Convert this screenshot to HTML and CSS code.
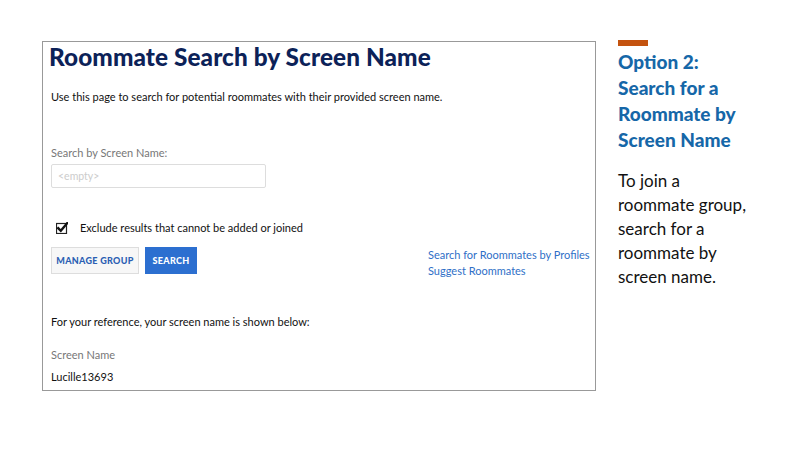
FILE: index.html
```html
<!DOCTYPE html>
<html>
<head>
<meta charset="utf-8">
<link rel="stylesheet" href="styles.css">
</head>
<body>
<div class="slide">
  <div class="frame">
    <h1 class="title">Roommate Search by Screen Name</h1>
    <p class="desc">Use this page to search for potential roommates with their provided screen name.</p>
    <div class="label">Search by Screen Name:</div>
    <div class="input">&lt;empty&gt;</div>
    <div class="check-row">
      <span class="checkbox">
        <svg width="12" height="12" viewBox="0 0 12 12"><rect x="0.5" y="1.5" width="10" height="10" fill="#fff" stroke="#222" stroke-width="1.2"/><path d="M2.2 6.2 L4.8 8.8 L11.2 1.2" fill="none" stroke="#111" stroke-width="2.4" stroke-linecap="square"/></svg>
      </span>
      <span class="check-label">Exclude results that cannot be added or joined</span>
    </div>
    <div class="action-row">
      <div class="buttons">
        <span class="btn btn-secondary">MANAGE GROUP</span>
        <span class="btn btn-primary">SEARCH</span>
      </div>
      <div class="links">
        <span class="link">Search for Roommates by Profiles</span>
        <span class="link">Suggest Roommates</span>
      </div>
    </div>
    <p class="ref">For your reference, your screen name is shown below:</p>
    <div class="label name-label">Screen Name</div>
    <div class="name-value">Lucille13693</div>
  </div>
  <aside class="side">
    <div class="accent"></div>
    <h2 class="side-title">Option 2: Search for a Roommate by Screen Name</h2>
    <p class="side-text">To join a roommate group, search for a roommate by screen name.</p>
  </aside>
</div>
</body>
</html>
```
FILE: styles.css
```css
html, body {
  margin: 0;
  padding: 0;
  background: #fff;
}
body {
  font-family: Lato, "Open Sans", "Liberation Sans", sans-serif;
  color: #1a1a1a;
}
.slide {
  width: 800px;
  height: 450px;
  display: flex;
  align-items: flex-start;
  padding: 40px 0 0 42px;
  box-sizing: border-box;
  gap: 22px;
}
.frame {
  width: 554px;
  height: 350px;
  box-sizing: border-box;
  margin-top: 1px;
  border: 1.5px solid #999;
  padding: 0 6px 0 8px;
  display: flex;
  flex-direction: column;
}
.title {
  margin: 0 0 0 -2px;
  font-size: 24.3px;
  line-height: 30px;
  font-weight: 900;
  color: #0c2258;
  letter-spacing: 0.1px;
}
.desc {
  margin: 17px 0 0;
  font-size: 11px;
  line-height: 16px;
  color: #111;
}
.label {
  margin-top: 40px;
  font-size: 11px;
  line-height: 16px;
  color: #777;
}
.input {
  margin-top: 3px;
  width: 215px;
  height: 24px;
  box-sizing: border-box;
  border: 1px solid #ddd;
  border-radius: 2px;
  padding: 0 6px;
  font-size: 10.5px;
  line-height: 22px;
  color: #ccc;
}
.check-row {
  margin-top: 32px;
  display: flex;
  align-items: center;
  height: 16px;
  padding-left: 5px;
}
.checkbox {
  display: flex;
  width: 12px;
  height: 12px;
}
.check-label {
  margin-left: 12px;
  font-size: 11px;
  line-height: 16px;
  color: #111;
}
.action-row {
  margin-top: 11px;
  height: 27px;
  display: flex;
  justify-content: space-between;
  align-items: flex-start;
}
.buttons {
  display: flex;
  gap: 6px;
}
.btn {
  display: flex;
  align-items: center;
  justify-content: center;
  height: 27px;
  box-sizing: border-box;
  font-size: 9px;
  font-weight: 900;
  letter-spacing: 0.3px;
}
.btn-secondary {
  width: 88px;
  background: #f7f7f7;
  border: 1px solid #ddd;
  color: #2b5fb3;
}
.btn-primary {
  width: 52px;
  background: #2c6fd0;
  color: #fff;
}
.links {
  display: flex;
  flex-direction: column;
  width: 161px;
}
.link {
  font-size: 11px;
  line-height: 16px;
  color: #2f6fc7;
  white-space: nowrap;
}
.ref {
  margin: 40px 0 0;
  font-size: 11px;
  line-height: 16px;
  color: #111;
}
.name-label {
  margin-top: 17px;
}
.name-value {
  margin-top: 6px;
  font-size: 11px;
  line-height: 16px;
  color: #111;
}
.side {
  width: 140px;
  margin-left: 0;
}
.accent {
  width: 30px;
  height: 6px;
  background: #c4530f;
}
.side-title {
  margin: 3px 0 0;
  font-size: 19px;
  line-height: 26px;
  font-weight: 900;
  color: #1667a8;
}
.side-text {
  margin: 16px 0 0;
  font-size: 17px;
  line-height: 24px;
  color: #111;
}
```
